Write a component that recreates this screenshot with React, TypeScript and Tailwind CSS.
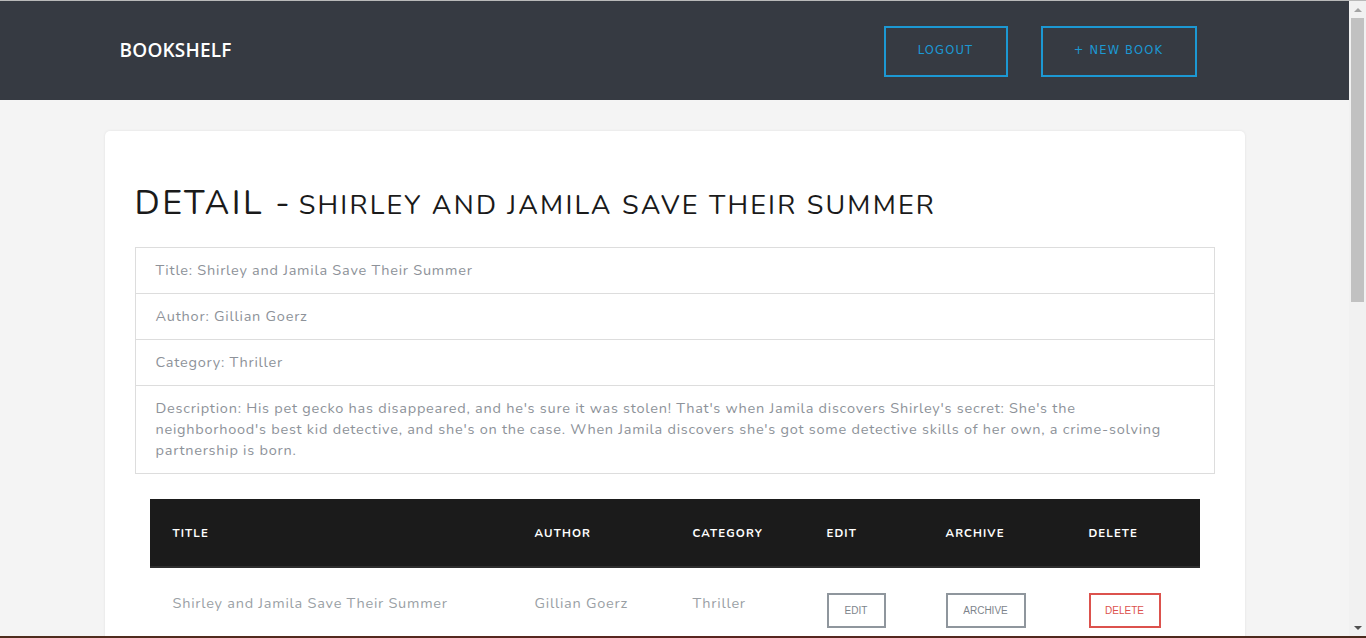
import React from "react";

const body = { fontFamily: '"Nunito", "Lato", "Noto Sans", sans-serif' };

export default function App() {
  return (
    <div className="w-[1366px] h-[638px] overflow-hidden flex flex-col bg-[#f4f4f4]" style={body}>
      <div className="h-px bg-[#b9b9b9] shrink-0" />
      <div className="flex flex-1 min-h-0">
        <div className="flex-1 min-w-0 flex flex-col">
          <header className="h-[99px] bg-[#363a42] shrink-0">
            <div className="w-[1140px] mx-auto h-full px-[15px] flex items-center justify-between">
              <div className="text-white text-[19px] font-semibold tracking-[0.2px]" style={{ fontFamily: '"Open Sans", "Noto Sans", sans-serif' }}>
                BOOKSHELF
              </div>
              <div className="flex gap-[33px] pr-[33px] pt-px">
                <button className="w-[124px] h-[51px] border-2 border-[#1c98d3] text-[#1c98d3] text-[11.5px] tracking-[1.2px]" style={{ fontFamily: '"DejaVu Sans", sans-serif' }}>
                  LOGOUT
                </button>
                <button className="w-[156px] h-[51px] border-2 border-[#1c98d3] text-[#1c98d3] text-[11.5px] tracking-[1.2px]" style={{ fontFamily: '"DejaVu Sans", sans-serif' }}>
                  + NEW BOOK
                </button>
              </div>
            </div>
          </header>
          <main className="flex-1 min-h-0 pt-[31px]">
            <div className="w-[1140px] mx-auto bg-white rounded-[5px] shadow-[0_0_3px_rgba(0,0,0,0.08)] px-[30px] pt-[52px] h-[600px]">
              <h1 className="text-[#1a1a1a] tracking-[2.5px] leading-[1.2] mb-[23px] whitespace-nowrap">
                <span className="text-[34px]">DETAIL -</span>{" "}
                <span className="text-[27px] tracking-[2.2px]">SHIRLEY AND JAMILA SAVE THEIR SUMMER</span>
              </h1>
              <ul className="border border-[#dddddd] text-[#8d9299] text-[14.5px] tracking-[0.75px] leading-[21px]">
                <li className="px-[20px] py-[12px] border-b border-[#dddddd]">Title: Shirley and Jamila Save Their Summer</li>
                <li className="px-[20px] py-[12px] border-b border-[#dddddd]">Author: Gillian Goerz</li>
                <li className="px-[20px] py-[12px] border-b border-[#dddddd]">Category: Thriller</li>
                <li className="pl-[20px] pr-[38px] pt-[12px] pb-[12px]">
                  Description: His pet gecko has disappeared, and he's sure it was stolen! That's when Jamila discovers Shirley's secret: She's the neighborhood's best kid detective, and she's on the case. When Jamila discovers she's got some detective skills of her own, a crime-solving partnership is born.
                </li>
              </ul>
              <div className="px-[15px] mt-[25px]">
                <table className="w-full border-collapse table-fixed">
                  <colgroup>
                    <col className="w-[362px]" />
                    <col className="w-[158px]" />
                    <col className="w-[134px]" />
                    <col className="w-[119px]" />
                    <col className="w-[143px]" />
                    <col className="w-[134px]" />
                  </colgroup>
                  <thead>
                    <tr className="bg-[#1b1b1b] h-[68px] border-b-2 border-[#2e2e2e] text-white text-[11.5px] font-bold tracking-[1.1px] text-left">
                      <th className="pl-[23px] pt-[2px] font-bold">TITLE</th>
                      <th className="pl-[23px] pt-[2px] font-bold">AUTHOR</th>
                      <th className="pl-[23px] pt-[2px] font-bold">CATEGORY</th>
                      <th className="pl-[23px] pt-[2px] font-bold">EDIT</th>
                      <th className="pl-[23px] pt-[2px] font-bold">ARCHIVE</th>
                      <th className="pl-[23px] pt-[2px] font-bold">DELETE</th>
                    </tr>
                  </thead>
                  <tbody>
                    <tr className="text-[#9a9fa5] text-[14.5px] tracking-[0.75px]">
                      <td className="pl-[23px] pt-[25px] align-top">Shirley and Jamila Save Their Summer</td>
                      <td className="pl-[23px] pt-[25px] align-top">Gillian Goerz</td>
                      <td className="pl-[23px] pt-[25px] align-top">Thriller</td>
                      <td className="pl-[23px] pt-[25px] align-top">
                        <button className="w-[59px] h-[35px] border-2 border-[#8f969d] text-[#7d848b] text-[10px] tracking-normal" style={{ fontFamily: '"Liberation Sans", Arial, sans-serif' }}>EDIT</button>
                      </td>
                      <td className="pl-[23px] pt-[25px] align-top">
                        <button className="w-[80px] h-[35px] border-2 border-[#8f969d] text-[#7d848b] text-[10px] tracking-normal" style={{ fontFamily: '"Liberation Sans", Arial, sans-serif' }}>ARCHIVE</button>
                      </td>
                      <td className="pl-[23px] pt-[25px] align-top">
                        <button className="w-[72px] h-[35px] border-2 border-[#dc524d] text-[#dc524d] text-[10px] tracking-normal" style={{ fontFamily: '"Liberation Sans", Arial, sans-serif' }}>DELETE</button>
                      </td>
                    </tr>
                  </tbody>
                </table>
              </div>
            </div>
          </main>
        </div>
        <div className="w-[17px] shrink-0 bg-[#f1f1f1] flex flex-col items-center">
          <div className="h-[17px] w-full flex items-center justify-center">
            <div className="w-0 h-0 border-l-[4px] border-r-[4px] border-b-[4px] border-l-transparent border-r-transparent border-b-[#a3a3a3]" />
          </div>
          <div className="w-[13px] h-[284px] bg-[#c1c1c1]" />
          <div className="flex-1" />
          <div className="h-[17px] w-full flex items-center justify-center">
            <div className="w-0 h-0 border-l-[4px] border-r-[4px] border-t-[4px] border-l-transparent border-r-transparent border-t-[#505050]" />
          </div>
        </div>
      </div>
      <div className="h-[2px] shrink-0 bg-gradient-to-r from-[#4e2d1d] via-[#5a2620] to-[#4a2a1c]" />
    </div>
  );
}
